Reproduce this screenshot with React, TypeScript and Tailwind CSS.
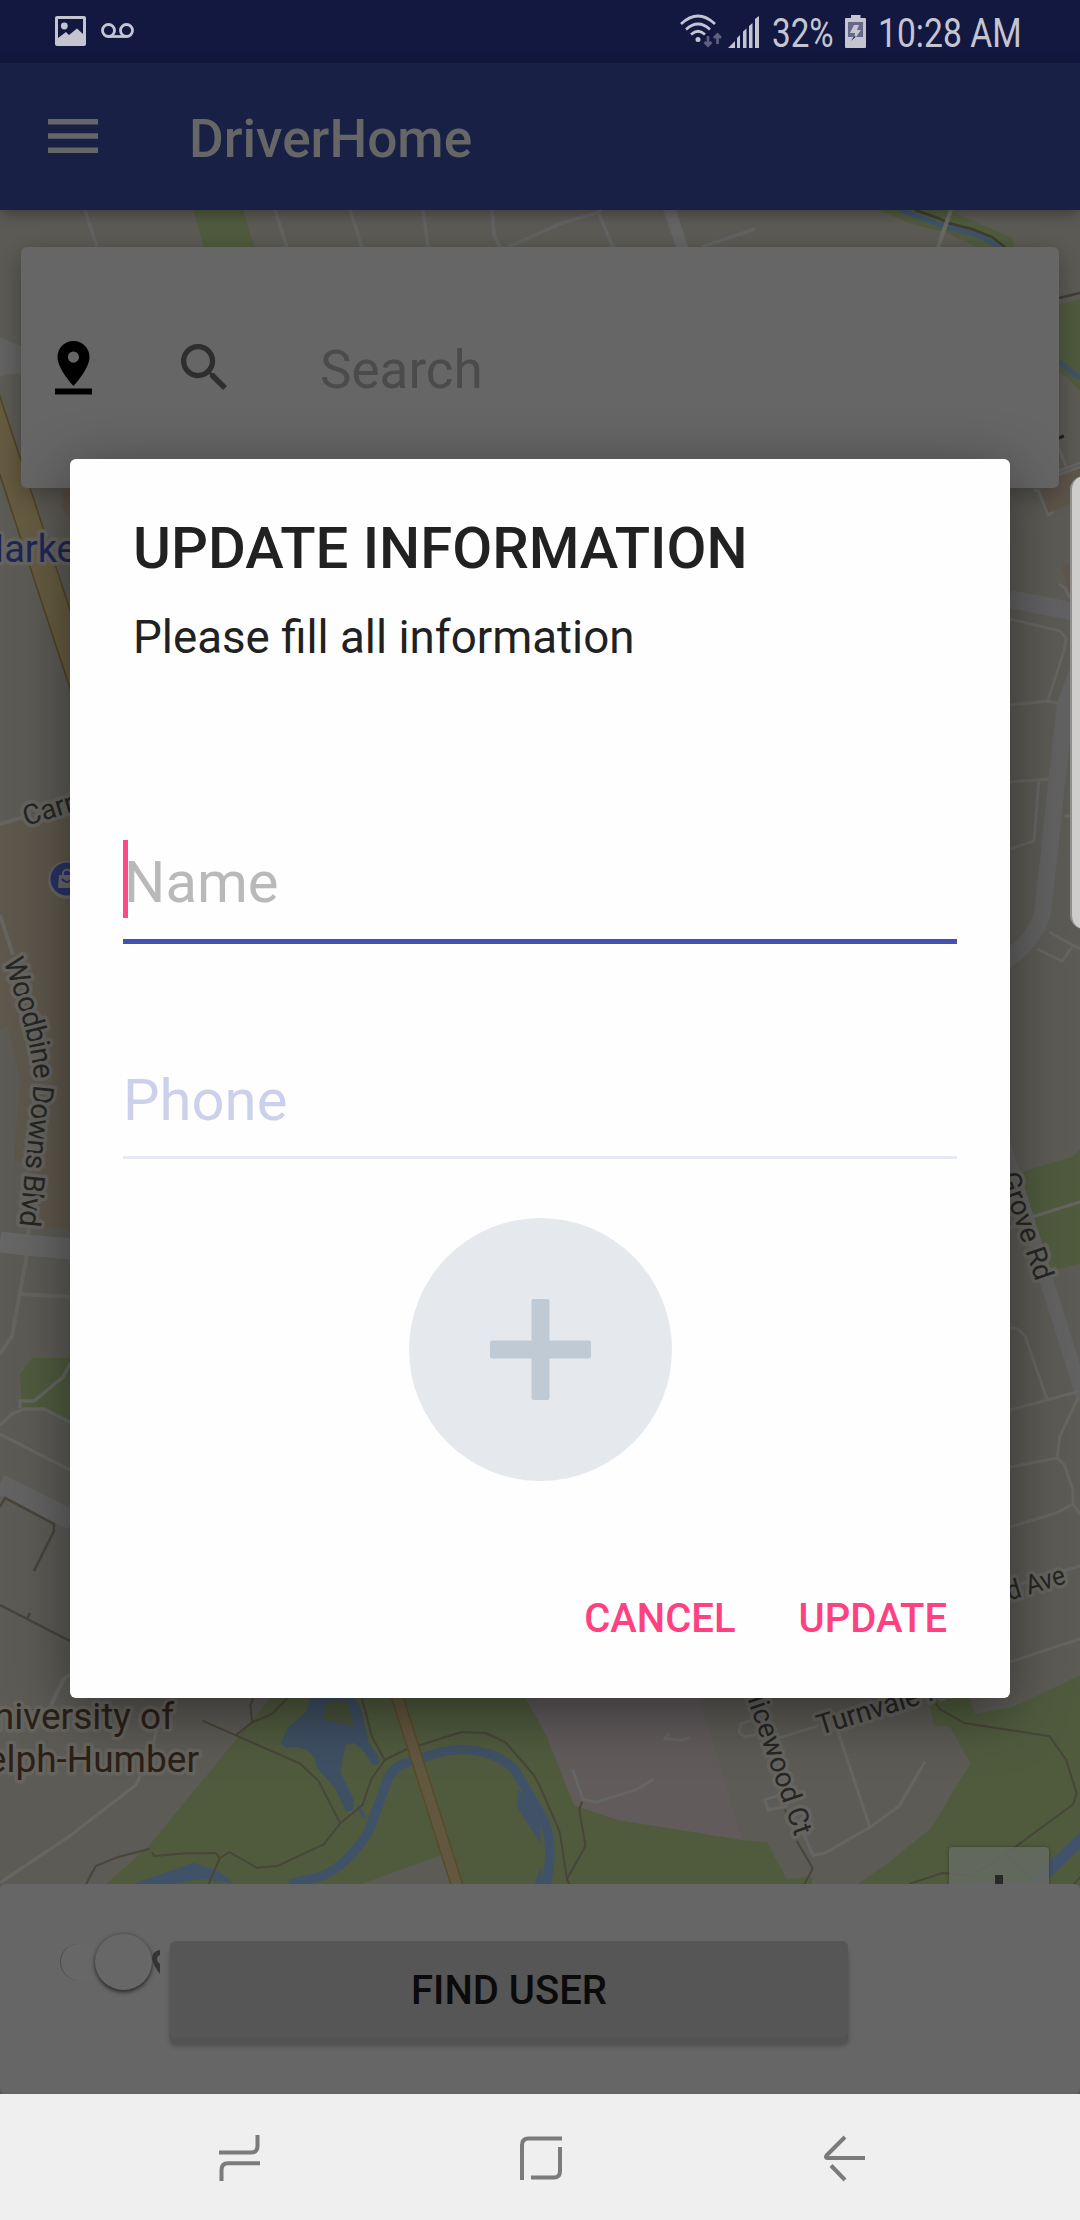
const halo = { stroke: "#65645f", strokeWidth: 7, paintOrder: "stroke" as const, strokeLinejoin: "round" as const };

function CityMap() {
  return (
    <svg
      className="absolute inset-0 h-full w-full"
      viewBox="0 210 1080 1884"
      fill="none"
      fontFamily="Roboto, sans-serif"
    >
      <rect y="210" width="1080" height="1884" fill="#5d5b56" />

      {/* northern strip */}
      <path d="M193 210 L204 247 H254 L243 210Z" fill="#505b3e" />
      <g stroke="#636363" strokeWidth="3.5">
        <path d="M85 210 L97 247 M275 210 L287 247 M350 210 L362 247 M423 210 L428 247" />
        <path d="M492 210 L494 235 L500 247 M508 247 L540 233 L562 223 L596 213 L602 210 M599 214 L613 247" />
        <path d="M702 247 L755 229" />
      </g>
      <path d="M663 210 H676 L688 247 H676Z" fill="#666" />
      <path d="M879 210 L912 224 L945 232 L976 247 H1015 L1012 238 L953 212 L948 210Z" fill="#505b3e" />
      <path d="M900 210 L944 226 L978 235 L1000 247" stroke="#40536b" strokeWidth="5" />
      <path d="M915 210 L938 218 L948 223 L972 229 L992 237 L1006 248" stroke="#3f3c32" strokeWidth="2.5" />
      <path d="M951 210 L938 247" stroke="#6a6a65" strokeWidth="4" />

      {/* north-east corner */}
      <path d="M1059 305 L1080 299 V391 L1068 378 L1059 373Z" fill="#505b3e" />
      <path d="M1059 298 L1080 293" stroke="#403e36" strokeWidth="2.5" />
      <path d="M1059 362 L1080 378" stroke="#40536b" strokeWidth="5" />
      <path d="M1050 441 L1064 436" stroke="#222" strokeWidth="3" />
      <path d="M1048 471 L1080 461 V500 L1046 513 L1042 492Z" fill="#5f564b" />
      <path d="M1062 567 L1080 560 V592 H1069Z" fill="#5f564b" />
      <g stroke="#656564" strokeWidth="3">
        <path d="M1058 446 L1066 466 M1058 471 L1080 463 M1058 475 L1080 467 M1034 491 L1038 490 L1048 515 L1054 512" />
        <path d="M1010 619 L1060 631 L1066 638 L1064 651 L1048 700 M1010 705 L1048 701 L1058 703" />
        <path d="M1010 782 L1050 779 M1039 779 L1034 841 L1010 849 M1059 584 L1065 588 L1070 598 M1064 816 H1080" />
        <path d="M1049 932 L1080 949 M1072 947 L1062 961 L1037 949" />
      </g>
      <path d="M1010 599 L1080 613" stroke="#626264" strokeWidth="18" />
      <path d="M1080 665 L1065 706 L1043 910 Q1037 940 1000 965" stroke="#626262" strokeWidth="17" />

      {/* west side */}
      <path d="M0 823 L70 803 V1229 L46 1227 L38 1220 L30 1165 L14 1160 L20 1080 L8 1025 L0 1030Z" fill="#5e574c" />
      <path d="M63 492 L70 490 V520 L61 508Z" fill="#5e5549" />
      <path d="M-20 375 L90 710" stroke="#504422" strokeWidth="26" />
      <path d="M-20 375 L90 710" stroke="#665c42" strokeWidth="23" />
      <path d="M0 337 L21 346 V374 Q10 372 0 377Z" fill="#636363" />
      <g stroke="#656460" strokeWidth="4">
        <path d="M0 824 L24 817 M0 915 L13 955 M29 1225 L26 1260 L12 1336 L0 1354 M21 1294 L70 1297" />
      </g>
      <path d="M0 1242 L26 1245 L72 1249" stroke="#666" strokeWidth="21" />
      <path d="M20 1374 L32 1358 H70 V1421 L44 1409 H22Z" fill="#505b3e" />
      <g stroke="#656562" strokeWidth="3.5">
        <path d="M70 1364 L63 1377 L34 1401 H20 V1408 M0 1425 L12 1414 L24 1409 H44 L72 1423 M0 1434 L70 1470" />
        <path d="M70 1674 L62 1681 L42 1722" />
      </g>
      <path d="M0 1484 L72 1520" stroke="#636363" strokeWidth="20" />
      <path d="M0 1507 L5 1498 L54 1524 V1531 L34 1571 M0 1605 L72 1642 M27 1619 L30 1613" stroke="#47443a" strokeWidth="2.5" />

      {/* east side */}
      <path d="M1018 1173 L1072 1157 L1080 1149 V1264 L1050 1271Z" fill="#505b3e" />
      <path d="M1004 1145 L1084 1400" stroke="#626262" strokeWidth="14" />
      <g stroke="#656563" strokeWidth="3">
        <path d="M1010 1228 L1032 1217 L1080 1202 M1010 1328 L1018 1329 L1025 1336 L1047 1399 M1010 1410 L1047 1400 L1080 1391" />
        <path d="M1078 1398 L1060 1436 L1057 1458 L1010 1467 M1057 1458 L1064 1464 L1073 1490 V1504 L1080 1514 M1010 1527 L1056 1513 L1073 1504" />
        <path d="M1010 1587 L1080 1566 M1010 1662 L1080 1639" />
      </g>

      {/* southern park */}
      <g transform="translate(0 1680) scale(0.34439 0.33333)">
        <path d="M785 54 L430 500 L305 615 H3150 V-20 L3105 0 H1600 V54Z" fill="#505b3e" />
        <path d="M1050 612 L1283 524 L1312 612Z" fill="#5d5b56" />
        <g stroke="#666664" strokeWidth="9">
          <path d="M185 0 L135 105 M455 150 L440 210 L395 315 L200 470 L0 608" />
        </g>
        <path d="M900 54 L890 95 L835 145 L815 190 L830 203 L860 200 L892 210 L915 235 L920 265 L970 320 L1005 395 L1025 390 L1028 360 L988 275 L1003 195 L1025 188 L1050 205 L1085 258 L1102 250 L1095 225 L1070 185 L1050 90 L1030 54Z" fill="#3f5064" />
        <path d="M948 64 L1008 62 L1028 137 L940 120Z" fill="#48533b" />
        <path d="M840 612 L935 588 Q1010 555 1070 455 L1125 300 Q1145 250 1200 245 Q1270 210 1345 208 Q1440 212 1495 270 L1568 400 Q1615 480 1585 612" stroke="#405267" strokeWidth="28" />
        <path d="M1505 330 L1500 380 L1570 490 L1568 390Z M385 612 L562 548 L635 574 L680 612 L590 596 L500 612Z M1040 372 L1065 412 L1055 415 L1038 388Z" fill="#405267" />
        <path d="M1570 560 L1552 612 H1580Z" fill="#405267" />
        <g stroke="#48463a" strokeWidth="6" strokeLinejoin="round">
          <path d="M588 122 L685 166 L870 250 L925 303 L988 430 M735 54 L727 75 L732 127 L685 166 M835 54 L788 103 L732 127" />
          <path d="M250 612 L278 558 L340 532 L435 506 M440 516 L448 528 L540 520 L627 519 L638 535 L606 612 M638 535 L666 516 L745 563 L805 558 L940 493 L988 430 L1052 376 L1078 298 L1117 240 L1175 210 L1340 156 L1410 159 L1468 187 L1550 285 L1568 320 L1625 455 L1647 600" />
          <path d="M1050 54 L1060 90 L1080 170 L1117 240" />
        </g>
        <path d="M1150 40 L1330 625" stroke="#594a27" strokeWidth="37" />
        <path d="M1150 40 L1330 625" stroke="#62573f" strokeWidth="29" />
      </g>

      {/* neighbourhood south of the dialog */}
      <g transform="translate(540 1680) scale(0.34439 0.33333)">
        <path d="M-50 40 L20 170 L98 375 L225 420 L600 482 L480 40Z" fill="#615b5c" />
        <path d="M460 40 L588 480 L660 487 L715 597 L790 590 V612 H922 L1010 550 L1135 445 L1250 250 L1190 140 L1145 135 L1125 40Z" fill="#5d5b56" />
        <path d="M1245 50 L1263 102 L1375 80 L1540 0 H1240Z" fill="#5d5b56" />
        <g stroke="#656563" strokeWidth="9">
          <path d="M375 158 L363 176 L412 181 L435 172 M95 268 L125 360 L165 366 L282 328 L330 298" />
          <path d="M690 175 L810 137 M620 118 L583 132 L578 158 L596 171 L640 160 M862 145 L958 442 M1118 244 L1043 378 L958 442 L826 520 L793 526 L765 460 M700 345 L652 359 L663 390 L720 378" />
        </g>
        <g stroke="#48453a" strokeWidth="6" strokeLinejoin="round">
          <path d="M122 365 L114 388 L132 498 L78 598 L86 612 M712 388 L718 410 M745 482 L792 565 L768 612" />
          <path d="M1135 50 L1162 88 L1232 129 L1480 169 L1528 240 L1558 340 L1548 373 L1352 522 L1255 587 L1168 579 L1072 612 M1352 522 L1430 605 M1568 592 L1550 612" />
        </g>
        <path d="M1435 612 L1580 470" stroke="#40536b" strokeWidth="36" />
      </g>

      {/* shopping marker */}
      <circle cx="67" cy="880" r="19" fill="#686766" />
      <circle cx="67" cy="879" r="16.5" fill="#293366" />
      <path d="M59 875 H75 V888 H58Z" fill="#686868" />
      <path d="M63 876 V872 Q67 867 71 872 V876" stroke="#686868" strokeWidth="2" />
      <path d="M62 879 Q67 885 72 879" stroke="#293366" strokeWidth="2" />

      {/* labels */}
      <path id="woodbine" d="M3 961 Q34 1045 34 1082 L18 1240" />
      <g fill="#262624" fontSize="28">
        <text {...halo} transform="translate(26 826) rotate(-17)">Carrier</text>
        <text {...halo} fontSize="29">
          <textPath href="#woodbine" textLength="270">Woodbine Downs Blvd</textPath>
        </text>
        <text {...halo} transform="translate(1036 1282) rotate(71)" textAnchor="end">Grove Rd</text>
        <text {...halo} transform="translate(1067 1583) rotate(-17)" textAnchor="end" fontSize="27" textLength="60" lengthAdjust="spacingAndGlyphs">d Ave</text>
        <text {...halo} transform="translate(795 1837) rotate(71)" textAnchor="end">Alicewood Ct</text>
        <text {...halo} transform="translate(820 1735) rotate(-17)">Turnvale Rd</text>
      </g>
      <text {...halo} x="-29" y="561.5" fontSize="38" fill="#1e2658">Market</text>
      <g fill="#2c2016" fontSize="37" textAnchor="end">
        <text {...halo} x="174" y="1729">University of</text>
        <text {...halo} x="199" y="1772">Guelph-Humber</text>
      </g>
    </svg>
  );
}

function StatusBar() {
  return (
    <header className="flex h-[63px] shrink-0 items-start bg-[#131840] text-[#c5c5d2]">
      <svg className="ml-[55px] mt-[16px] h-[30px] w-[31px]" viewBox="0 0 31 30" fill="currentColor">
        <path fillRule="evenodd" d="M2 0H29Q31 0 31 2V28Q31 30 29 30H2Q0 30 0 28V2Q0 0 2 0ZM3 3V22L11 16L14 19L22 12.500L28 18V3Z" />
        <circle cx="9.300" cy="10" r="3.400" />
      </svg>
      <svg className="ml-[15px] mt-[23px] h-[15px] w-[33px]" viewBox="0 0 33 15" fill="none" stroke="currentColor" strokeWidth="2.800">
        <circle cx="7.500" cy="7.500" r="6" />
        <circle cx="25.500" cy="7.500" r="6" />
        <path d="M7.500 13.500H25.500" />
      </svg>
      <svg className="ml-[546px] mt-[14px] h-[34px] w-[42px]" viewBox="0 0 42 34" fill="none" stroke="currentColor" strokeWidth="2.700">
        <path d="M1 10Q18 -6 35 10M6 15.500Q18 4.500 30 15.500M11 20.500Q18 14 25 20.500" />
        <circle cx="18" cy="25.500" r="2.500" fill="currentColor" stroke="none" />
        <path d="M28 22V31M24.500 28L28 31.500L31.500 28M37.500 30V20.500M34 24L37.500 20.500L41 24" stroke="#5d6080" />
      </svg>
      <svg className="ml-[6px] mt-[16px] h-[32px] w-[32px]" viewBox="0 0 32 32" fill="currentColor">
        <path d="M0 32L7 25V32ZM9 22L12 19V32H9ZM15 15.500L18.500 12.500V32H15ZM21 10L24.500 7V32H21ZM27 3L31 0V32H27Z" />
      </svg>
      <span className="ml-[12px] mt-[14px] w-[73px] origin-left scale-x-[0.83] whitespace-nowrap text-[40px] leading-none">32%</span>
      <svg className="mt-[15px] h-[33px] w-[21px]" viewBox="0 0 21 33">
        <path d="M6 0H15.500V3H20Q21 3 21 4V32Q21 33 20 33H1Q0 33 0 32V4Q0 3 1 3H6Z" fill="#c5c5d2" />
        <path d="M3 7H18V22H3Z" fill="#656886" />
        <path d="M9 10H14L12 15H16L9 25L10 18H5Z" fill="#c5c5d2" />
        <path d="M6 26L9 21.500H11Z" fill="#131840" />
      </svg>
      <span className="ml-[12px] mt-[14px] origin-left scale-x-[0.842] whitespace-nowrap text-[40px] leading-none">10:28 AM</span>
    </header>
  );
}

function SearchCard() {
  return (
    <div className="relative mx-[21px] mt-[37px] flex h-[241px] shrink-0 items-center rounded-[6px] bg-[#666] shadow-[0_6px_26px_rgba(0,0,0,0.32)]">
      <svg className="ml-[34px] h-[54px] w-[37px]" viewBox="0 0 37 54">
        <path fillRule="evenodd" d="M18.500 0C9.500 0 2.500 7 2.500 16C2.500 28 18.500 45 18.500 45S34.500 28 34.500 16C34.500 7 27.500 0 18.500 0ZM18.500 10.500A5.600 5.600 0 1 1 18.400 21.700A5.600 5.600 0 1 1 18.500 10.500ZM0 47.500H37V53.500H0Z" />
      </svg>
      <svg className="mb-[2px] ml-[89px] h-[46px] w-[46px]" viewBox="3 3 17.490 17.490" fill="#2e2e2e">
        <path d="M15.500 14h-.79l-.28-.27A6.471 6.471 0 0 0 16 9.500 6.500 6.500 0 1 0 9.500 16c1.610 0 3.090-.59 4.230-1.570l.27.28v.79l5 4.990L20.490 19l-4.990-5zm-6 0C7.010 14 5 11.990 5 9.500S7.010 5 9.500 5 14 7.010 14 9.500 11.990 14 9.500 14z" />
      </svg>
      <span className="ml-[93px] mt-[6px] text-[53px] leading-none text-[#4b4b4b]">Search</span>
    </div>
  );
}

function BottomPanel() {
  return (
    <div className="relative mt-auto flex h-[210px] shrink-0 rounded-[6px] bg-[#666]">
      <div className="ml-[60px] mt-[49px] flex h-[57px] w-[100px] items-center">
        <div className="h-[36px] w-[52px] rounded-l-full border-l border-[#4c4c4c] bg-[#676767]" />
        <div className="-ml-[16px] size-[57px] shrink-0 rounded-full border-t border-[#5a5a5a] bg-[#676767] shadow-[0_2px_4px_rgba(0,0,0,0.65)]" />
        <svg className="h-[24px] w-[8px] shrink-0" viewBox="0 0 8 24" fill="#343434">
          <path d="M8 0Q0 1 0 9Q1 15 8 24V14Q5 12 5 9Q5 6 8 5Z" />
        </svg>
      </div>
      <button className="ml-[10px] mt-[57px] h-[97px] w-[678px] rounded-[6px] bg-[#565656] pt-[3px] text-[40px] font-medium leading-none text-[#0b0b0b] shadow-[0_6px_1px_#535353,0_8px_5px_rgba(0,0,0,0.25)]">
        FIND USER
      </button>
    </div>
  );
}

function UpdateDialog() {
  return (
    <section className="absolute left-[70px] top-[249px] flex h-[1239px] w-[940px] flex-col rounded-[6px] bg-[#fefefe] text-[#212121] shadow-[0_14px_60px_rgba(0,0,0,0.45)]">
      <h2 className="ml-[63px] mt-[60px] whitespace-nowrap text-[58px] font-medium leading-none">UPDATE INFORMATION</h2>
      <p className="ml-[63px] mt-[38px] whitespace-nowrap text-[45.7px] leading-[46px]">Please fill all information</p>
      <div className="mx-[53px] mt-[178px] flex h-[105px] items-start border-b-[5px] border-[#4352ae]">
        <span className="z-10 mt-[1px] h-[78px] w-[5px] bg-[#ff4081]/95" />
        <span className="-ml-[4px] mt-[14px] text-[58px] leading-none text-[#b9b9b9]">Name</span>
      </div>
      <div className="mx-[53px] mt-[112px] h-[103px] border-b-[3px] border-[#e6e8f2] pt-[15px]">
        <span className="block text-[58px] leading-none text-[#cbd1ea]">Phone</span>
      </div>
      <div className="mt-[59px] flex size-[263px] items-center justify-center self-center rounded-full bg-[#e5e9ee]">
        <svg className="size-[101px]" viewBox="0 0 101 101" fill="#c0cad5">
          <rect x="41.500" width="18" height="101" rx="2" />
          <rect y="41.500" width="101" height="18" rx="2" />
        </svg>
      </div>
      <div className="mr-[63px] mt-[118px] flex justify-end gap-[63px] text-[40px] font-medium leading-none text-[#ff4081]">
        <button>CANCEL</button>
        <button>UPDATE</button>
      </div>
    </section>
  );
}

function NavigationBar() {
  return (
    <nav className="flex h-[126px] shrink-0 items-start bg-[#efefef] pt-[40px]">
      <svg className="ml-[218px] h-[48px] w-[42px]" viewBox="0 0 42 48" fill="none" stroke="#7b7b7b" strokeWidth="4">
        <path d="M1 18.500H33Q39.500 18.500 39.500 12V1M42 29.300H10Q3.500 29.300 3.500 36V47" />
      </svg>
      <svg className="ml-[259px] mt-[1px] h-[46px] w-[44px]" viewBox="0 0 44 46" fill="none" stroke="#7b7b7b" strokeWidth="4">
        <path d="M3 45V10Q3 3.500 9.500 3.500H43M41 12V36Q41 42.500 35 42.500H12" />
      </svg>
      <svg className="ml-[260px] h-[48px] w-[44px]" viewBox="0 0 44 48" fill="none" stroke="#7b7b7b" strokeWidth="4" strokeLinejoin="round">
        <path d="M22 3L3.500 21.500Q2 24 5 24H42M8 31.500L22 46" />
      </svg>
    </nav>
  );
}

export default function App() {
  return (
    <div className="flex h-[2220px] w-[1080px] flex-col overflow-hidden bg-[#5d5b56] font-[Roboto,sans-serif]">
      <StatusBar />
      <div className="relative z-10 flex h-[147px] shrink-0 items-center bg-[#192046] text-[#666] shadow-[0_4px_14px_rgba(0,0,0,0.35)]">
        <svg className="mb-[1px] ml-[48px] h-[34px] w-[50px]" viewBox="0 0 50 34" fill="currentColor">
          <path d="M0 0H50V5.500H0ZM0 14.200H50V19.700H0ZM0 28.400H50V34H0Z" />
        </svg>
        <h1 className="ml-[91px] mt-[6px] text-[53.200px] font-medium leading-none">DriverHome</h1>
      </div>
      <main className="relative flex h-[1884px] shrink-0 flex-col overflow-hidden">
        <CityMap />
        <SearchCard />
        <div className="absolute left-[949px] top-[1637px] flex h-[100px] w-[100px] items-start justify-center rounded-[4px] bg-[#666b63]/85 shadow-[0_0_4px_rgba(0,0,0,0.3)]">
          <span className="mt-[28px] h-[44px] w-[8px] bg-[#292929]" />
        </div>
        <BottomPanel />
        <UpdateDialog />
        <div className="absolute left-[1070px] top-[266px] h-[453px] w-[30px] rounded-[14px] border-l-2 border-[#8f8f8d] bg-[#cecdcb]" />
      </main>
      <NavigationBar />
    </div>
  );
}
